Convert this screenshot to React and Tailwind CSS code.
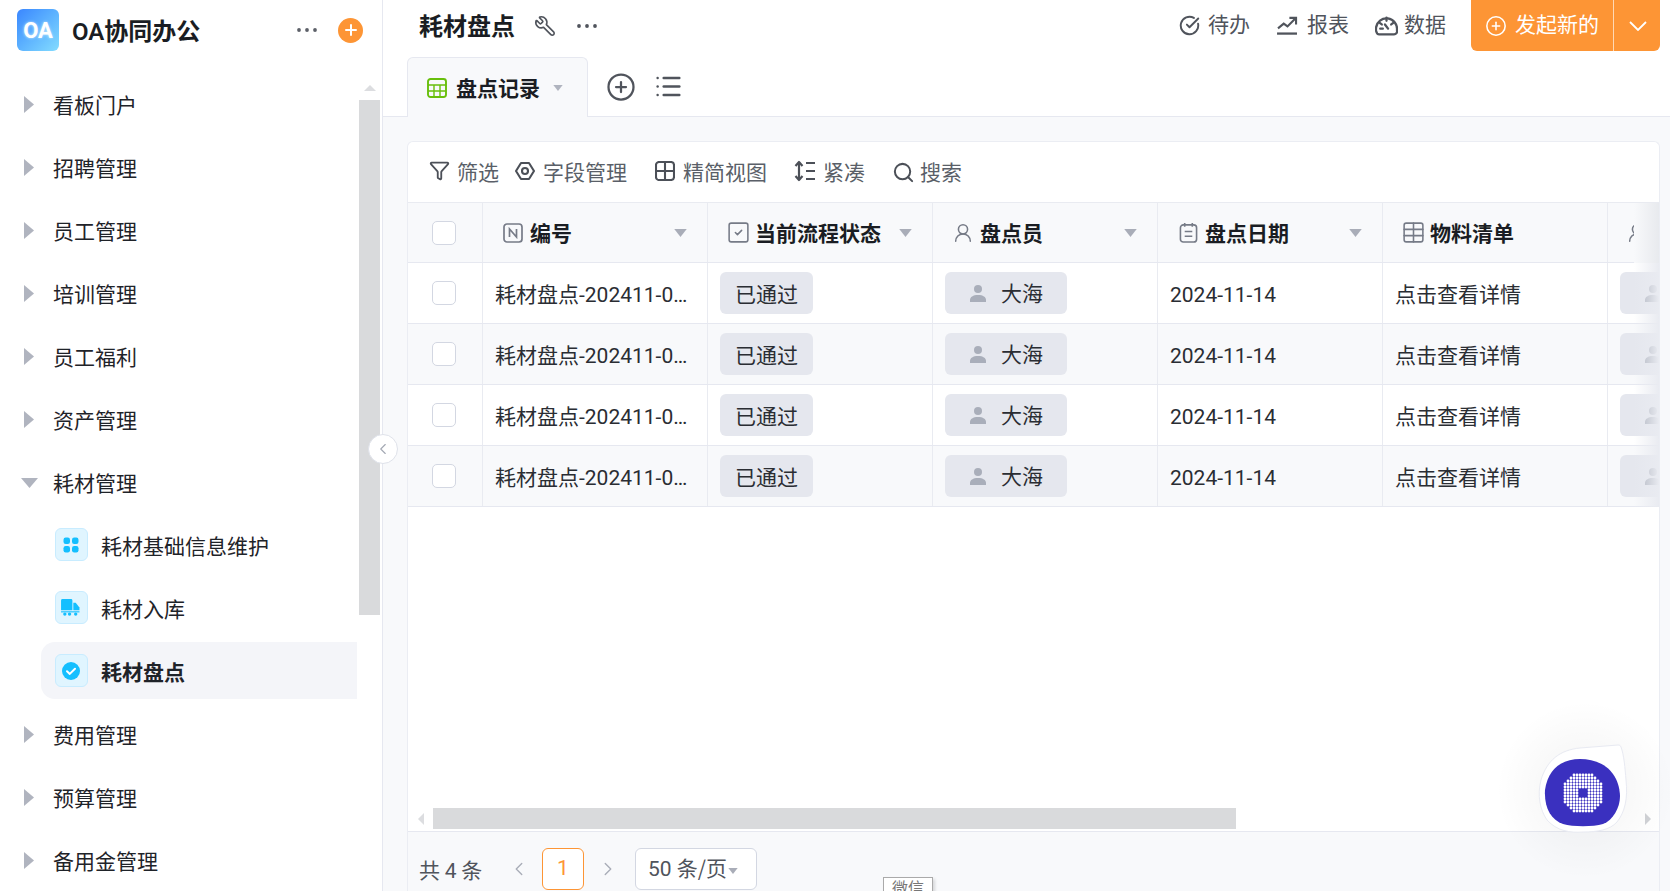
import React from 'react'
import { Wrench, CirclePlus, List, Funnel, Search, CircleCheckBig, ChevronLeft, ChevronRight, SquareCheck, UserRound, Table } from 'lucide-react'

const MENU_TOP = ['看板门户', '招聘管理', '员工管理', '培训管理', '员工福利', '资产管理']
const MENU_BOTTOM = ['费用管理', '预算管理', '备用金管理']
const ROWS = ['0001', '0002', '0003', '0004']
const COLS = 'grid grid-cols-[75px_225px_225px_225px_225px_225px_225px]'
// latin and digits sit in Roboto, the page itself stays on the CJK font
const NUM = "[font-family:'Roboto','Noto_Sans_CJK_SC',sans-serif]"

const Dots = ({ className }) => (
  <svg viewBox="0 0 20 4" className={className} fill="currentColor">
    <circle cx="2" cy="2" r="1.9" />
    <circle cx="10" cy="2" r="1.9" />
    <circle cx="18" cy="2" r="1.9" />
  </svg>
)

const Caret = ({ className }) => (
  <svg viewBox="0 0 14 9" className={className} fill="currentColor">
    <path d="M0 0h14L7 9z" />
  </svg>
)

const MenuItem = ({ label }) => (
  <div className="h-[63px] flex items-center shrink-0">
    <svg viewBox="0 0 10 17" className="w-[10px] h-[17px] ml-[24px] mr-[19px] text-[#b0b4bf]" fill="currentColor">
      <path d="M0 0l10 8.5L0 17z" />
    </svg>
    <span className="text-[21px] text-[#1f2329]">{label}</span>
  </div>
)

const SubItem = ({ label, active, children }) => (
  <div className={`h-[57px] mt-[2px] mb-[4px] ml-[41px] pl-[14px] flex items-center rounded-l-[14px] shrink-0 ${active ? 'bg-[#f4f5f9]' : ''}`}>
    <div className="w-[33px] h-[33px] pr-[2px] rounded-[6px] bg-[#e0f5ff] border border-[#c8ecff] flex items-center justify-center mr-[13px]">
      {children}
    </div>
    <span className={`text-[21px] text-[#1f2329] pt-[2px] ${active ? 'font-bold' : ''}`}>{label}</span>
  </div>
)

const Sidebar = () => (
  <aside className="relative z-10 w-[383px] shrink-0 h-full border-r border-[#e6e8f0] flex flex-col">
    <div className="h-[60px] flex items-center shrink-0">
      <div className={`w-[42px] h-[42px] ml-[17px] rounded-[6px] bg-gradient-to-br from-[#3b86ff] to-[#84dcff] flex items-center justify-center text-white font-bold text-[22px] [text-shadow:0_0_3px_#ffffffaa] ${NUM}`}>OA</div>
      <span className="ml-[13px] w-[131px] pt-[2px] text-[24px] font-semibold text-[#1a1d23] whitespace-nowrap"><span className={NUM}>OA</span>协同办公</span>
      <Dots className="w-[20px] h-[4px] ml-[94px] text-[#5c6068]" />
      <div className="w-[25px] h-[25px] ml-[21px] rounded-full bg-[#fd9535] flex items-center justify-center">
        <svg viewBox="0 0 12 12" className="w-[12px] h-[12px]" stroke="white" strokeWidth="2" strokeLinecap="round">
          <path d="M6 1v10M1 6h10" />
        </svg>
      </div>
    </div>
    <div className="flex flex-1 min-h-0 pt-[13px]">
      <div className="w-[357px] shrink-0 flex flex-col">
        {MENU_TOP.map(m => <MenuItem key={m} label={m} />)}
        <div className="h-[63px] flex items-center shrink-0">
          <svg viewBox="0 0 17 10" className="w-[17px] h-[10px] ml-[21px] mr-[15px] text-[#b0b4bf]" fill="currentColor">
            <path d="M0 0h17L8.5 10z" />
          </svg>
          <span className="text-[21px] text-[#1f2329]">耗材管理</span>
        </div>
        <SubItem label="耗材基础信息维护">
          <svg viewBox="0 0 16 16" className="w-[16px] h-[16px]" fill="#14bfff">
            <rect x="0.5" y="0.5" width="6.5" height="6.5" rx="2.2" />
            <rect x="9" y="0.5" width="6.5" height="6.5" rx="2.2" />
            <rect x="0.5" y="9" width="6.5" height="6.5" rx="2.2" />
            <rect x="9" y="9" width="6.5" height="6.5" rx="2.2" />
          </svg>
        </SubItem>
        <SubItem label="耗材入库">
          <svg viewBox="0 0 20 18" className="w-[19px] h-[17px]" fill="#14bfff">
            <path d="M1.5 0h9a1.5 1.5 0 0 1 1.5 1.5V12H0V1.5A1.5 1.5 0 0 1 1.5 0z" />
            <path d="M13 4h2.5L19.5 9v3H13z" />
            <path d="M0 13h19.5v1.2H0z" />
            <circle cx="4" cy="16" r="1.8" />
            <circle cx="9" cy="16" r="1.8" />
            <circle cx="15.5" cy="16" r="1.8" />
          </svg>
        </SubItem>
        <SubItem label="耗材盘点" active>
          <svg viewBox="0 0 18 18" className="w-[18px] h-[18px]">
            <circle cx="9" cy="9" r="9" fill="#14bfff" />
            <path d="M5 9.3l2.8 2.6L13 6.8" fill="none" stroke="white" strokeWidth="2" strokeLinecap="round" strokeLinejoin="round" />
          </svg>
        </SubItem>
        {MENU_BOTTOM.map(m => <MenuItem key={m} label={m} />)}
      </div>
      <div className="w-[21px] ml-[2px] flex flex-col items-center">
        <svg viewBox="0 0 12 6" className="w-[12px] h-[6px] mt-[12px] mb-[9px] text-[#dcdde0]" fill="currentColor">
          <path d="M6 0l6 6H0z" />
        </svg>
        <div className="w-[21px] h-[515px] bg-[#d9dadc]" />
      </div>
    </div>
    <button className="absolute left-[368px] top-[434px] w-[30px] h-[30px] rounded-full bg-white border border-[#dfe2ea] flex items-center justify-center text-[#a3a8b3]">
      <ChevronLeft size={18} strokeWidth={1.5} />
    </button>
  </aside>
)

const TopLink = ({ icon, label, className }) => (
  <div className={`flex items-center text-[21px] text-[#50545c] ${className}`}>
    {icon}
    <span className="pb-[4px]">{label}</span>
  </div>
)

const Header = () => (
  <header className="h-[57px] flex items-start shrink-0">
    <div className="h-[51px] flex items-center pl-[36px] flex-1">
      <span className="text-[24px] font-bold text-[#1a1d23] pb-[2px]">耗材盘点</span>
      <Wrench size={22} strokeWidth={1.8} className="ml-[19px] text-[#50545c] -scale-x-100" />
      <Dots className="w-[20px] h-[4px] ml-[21px] text-[#50545c]" />
    </div>
    <div className="h-[51px] flex items-center">
      <TopLink label="待办" className="mr-[27px]" icon={<CircleCheckBig size={21} strokeWidth={2.2} className="mr-[8px]" />} />
      <TopLink label="报表" className="mr-[26px]" icon={
        <svg viewBox="0 0 22 20" className="w-[21px] h-[19px] mr-[9px]" fill="none" stroke="currentColor" strokeWidth="2.200">
          <path d="M1 13l6-5 4 3 8-8M13 2h7v7" />
          <path d="M0 18.5h21" strokeWidth="2.4" />
        </svg>
      } />
      <TopLink label="数据" className="mr-[25px]" icon={
        <svg viewBox="0 0 22 20" className="w-[23px] h-[21px] mr-[6px]" fill="none" stroke="currentColor" strokeWidth="2.200">
          <path d="M4 18.5h14a3 3 0 0 0 3-4A10 10 0 1 0 1 12c0 1-.2 2 0 3 .4 2 1.5 3.500 3 3.500z" />
          <path d="M11 2.500v3M4.500 7.500l2 1.500M17.500 7.500l-2 1.500M5 13h2.500M9.500 9l3 4" strokeLinecap="round" />
        </svg>
      } />
      <div className="w-[189px] h-[51px] bg-[#fd9535] rounded-b-[6px] flex items-center text-white mr-[10px]">
        <CirclePlus size={22} strokeWidth={1.7} className="ml-[14px] mr-[8px]" />
        <span className="text-[21px] w-[84px] pb-[4px] whitespace-nowrap">发起新的</span>
        <div className="w-px h-full bg-[#ffd9b5] ml-[14px]" />
        <svg viewBox="0 0 18 10" className="w-[18px] h-[10px] ml-[15px]" fill="none" stroke="white" strokeWidth="1.800">
          <path d="M1 1l8 8 8-8" />
        </svg>
      </div>
    </div>
  </header>
)

const Tabs = () => (
  <div className="h-[60px] flex items-end border-b border-[#e6e8f0] pl-[24px] shrink-0">
    <div className="w-[181px] h-[60px] -mb-px bg-[#f8f9fb] border border-b-0 border-[#e6e8f0] rounded-t-[6px] flex items-center pl-[19px]">
      <svg viewBox="0 0 20 20" className="w-[20px] h-[20px] mr-[9px]" fill="none" stroke="#68bf0c" strokeWidth="1.900">
        <rect x="1" y="1" width="18" height="18" rx="2.500" />
        <path d="M1 7h18M1 13h18M7 7v12M13 7v12" strokeWidth="1.400" />
      </svg>
      <span className="text-[21px] font-bold text-[#1a1d23]">盘点记录</span>
      <Caret className="w-[10px] h-[6px] ml-[13px] text-[#b0b4bf]" />
    </div>
    <div className="h-[58px] flex items-center text-[#50545c]">
      <CirclePlus size={30} strokeWidth={1.800} className="ml-[18px]" />
      <List size={29} strokeWidth={2} className="ml-[18px] -mt-[2px]" />
    </div>
  </div>
)

const Tool = ({ icon, label, className }) => (
  <div className={`flex items-center text-[21px] text-[#5a5f68] ${className}`}>
    {icon}
    <span>{label}</span>
  </div>
)

const Toolbar = () => (
  <div className="h-[61px] flex items-center pl-[21px] border-b border-[#e9ebf1] shrink-0">
    <Tool label="筛选" className="mr-[16px]" icon={<Funnel size={21} strokeWidth={2.100} className="mr-[7px] text-[#4c5058] -mt-[3px]" />} />
    <Tool label="字段管理" className="mr-[28px]" icon={
      <svg viewBox="0 0 20 20" className="w-[20px] h-[20px] mr-[8px] text-[#4c5058] -mt-[3px]" fill="none" stroke="currentColor" strokeWidth="2.100">
        <path d="M6 2h8l5 8-5 8H6l-5-8z" strokeLinejoin="round" />
        <circle cx="10" cy="10" r="3" />
      </svg>
    } />
    <Tool label="精简视图" className="mr-[27px]" icon={
      <svg viewBox="0 0 20 20" className="w-[20px] h-[20px] mr-[8px] text-[#4c5058] -mt-[3px]" fill="none" stroke="currentColor" strokeWidth="2.100">
        <rect x="1" y="1" width="18" height="18" rx="3" />
        <path d="M10 1v18M1 10h18" />
      </svg>
    } />
    <Tool label="紧凑" className="mr-[27px]" icon={
      <svg viewBox="0 0 22 22" className="w-[22px] h-[22px] mr-[7px] text-[#4c5058] -mt-[2px]" fill="none" stroke="currentColor" strokeWidth="2.200">
        <path d="M5 2v18" />
        <path d="M1.500 6L5 2l3.500 4M1.500 16L5 20l3.500-4" strokeLinejoin="round" />
        <path d="M12 3h9M12 11h9M12 19h9" />
      </svg>
    } />
    <Tool label="搜索" icon={<Search size={23} strokeWidth={2.100} className="mr-[5px] text-[#4c5058]" />} />
  </div>
)

const HeadCell = ({ icon, label, caret }) => (
  <div className="h-full flex items-center pl-[19px] pr-[20px] border-r border-[#e9ebf1]">
    <span className="w-[22px] h-[22px] mr-[6px] flex items-center justify-center text-[#767b87]">{icon}</span>
    <span className="text-[21px] font-bold text-[#1a1d23] flex-1 whitespace-nowrap">{label}</span>
    {caret && <Caret className="w-[13px] h-[8px] text-[#a9adb8]" />}
  </div>
)

const Check = () => <div className="w-[24px] h-[24px] rounded-[5px] border border-[#d3d7e2] bg-white" />

const Person = () => (
  <svg viewBox="0 0 16 18" className="w-[16px] h-[18px] text-[#a9aeba]" fill="currentColor">
    <circle cx="8" cy="5" r="4" />
    <path d="M0 18v-2c0-3 3-5 8-5s8 2 8 5v2z" />
  </svg>
)

const PersonTag = () => (
  <span className="w-[122px] h-[42px] rounded-[6px] bg-[#e5e7ee] flex items-center pl-[25px] gap-[15px] text-[21px] text-[#2a2d33] whitespace-nowrap"><Person />大海</span>
)

const TableView = () => (
  <div className="relative flex-1 min-h-0 overflow-hidden">
    <div className={`${COLS} h-[60px] bg-[#f8f9fb] border-b border-[#e6e8f0] w-[1425px]`}>
      <div className="h-full flex items-center justify-center pr-[2px] border-r border-[#e9ebf1]"><Check /></div>
      <HeadCell label="编号" caret icon={
        <svg viewBox="0 0 20 20" className="w-[20px] h-[20px]" fill="none" stroke="currentColor" strokeWidth="1.700">
          <rect x="1" y="1" width="18" height="18" rx="3" />
          <path d="M6.500 14V6l7 8V6" />
        </svg>
      } />
      <HeadCell label="当前流程状态" caret icon={<SquareCheck size={25} strokeWidth={1.500} className="shrink-0" />} />
      <HeadCell label="盘点员" caret icon={<UserRound size={22} strokeWidth={1.700} />} />
      <HeadCell label="盘点日期" caret icon={
        <svg viewBox="0 0 20 22" className="w-[19px] h-[21px]" fill="none" stroke="currentColor" strokeWidth="1.700">
          <rect x="1.500" y="3" width="17" height="18" rx="3" />
          <path d="M6 1v4M14 1v4M6 10h8M6 15h8" />
        </svg>
      } />
      <HeadCell label="物料清单" icon={<Table size={25} strokeWidth={1.500} className="shrink-0" />} />
      <div className="h-full flex items-center pl-[18px] text-[#767b87]"><UserRound size={22} strokeWidth={1.700} /></div>
    </div>
    {ROWS.map((r, i) => (
      <div key={r} className={`${COLS} h-[61px] w-[1425px] border-b border-[#e6e8f0] ${i % 2 ? 'bg-[#f8f9fb]' : 'bg-white'}`}>
        <div className="flex items-center justify-center pr-[2px] border-r border-[#e9ebf1]"><Check /></div>
        <div className="flex items-center pl-[12px] pr-[12px] border-r border-[#e9ebf1] min-w-0">
          <span className={`truncate pt-[6px] text-[21px] text-[#2a2d33] ${NUM}`}>耗材盘点-202411-{r}</span>
        </div>
        <div className="flex items-center pl-[12px] border-r border-[#e9ebf1]">
          <span className="w-[93px] h-[42px] pt-[1px] rounded-[6px] bg-[#e5e7ee] flex items-center justify-center text-[21px] text-[#2a2d33]">已通过</span>
        </div>
        <div className="flex items-center pl-[12px] border-r border-[#e9ebf1]"><PersonTag /></div>
        <div className="flex items-center pl-[12px] border-r border-[#e9ebf1] text-[21px] text-[#2a2d33]"><span className={`pt-[6px] ${NUM}`}>2024-11-14</span></div>
        <div className="flex items-center pl-[12px] pt-[2px] border-r border-[#e9ebf1] text-[21px] text-[#2a2d33]">点击查看详情</div>
        <div className="flex items-center pl-[12px]"><PersonTag /></div>
      </div>
    ))}
    <div className="absolute right-0 top-0 w-[25px] h-[60px] bg-gradient-to-r from-[#f8f9fb] to-[#e8eaee]" />
    <div className="absolute right-0 top-[60px] w-[25px] h-[244px] bg-gradient-to-r from-transparent to-[#e9ebf1]" />
  </div>
)

const HScroll = () => (
  <div className="h-[23px] flex items-center shrink-0 bg-white pb-[2px]">
    <svg viewBox="0 0 6 12" className="w-[6px] h-[12px] ml-[10px] text-[#dcdde0]" fill="currentColor"><path d="M6 0v12L0 6z" /></svg>
    <div className="w-[803px] h-[21px] ml-[9px] bg-[#d9dadc]" />
    <svg viewBox="0 0 6 12" className="w-[6px] h-[12px] ml-auto mr-[8px] text-[#d0d2d6]" fill="currentColor"><path d="M0 0v12l6-6z" /></svg>
  </div>
)

const Pagination = () => (
  <div className="h-[60px] border-t border-[#e6e8f0] bg-[#f8f9fb] flex items-start pt-[16px] pl-[11px] shrink-0 text-[21px] text-[#50545c]">
    <span className="leading-[42px] w-[76px] whitespace-nowrap">共 <span className={NUM}>4</span> 条</span>
    <ChevronLeft size={22} strokeWidth={1.500} className="mt-[10px] ml-[13px] text-[#a9adb8]" />
    <span className={`w-[42px] h-[42px] ml-[12px] rounded-[6px] border border-[#fd9535] bg-white text-[#fd9535] flex items-center justify-center ${NUM}`}>1</span>
    <ChevronRight size={22} strokeWidth={1.500} className="mt-[10px] ml-[13px] text-[#a9adb8]" />
    <div className="w-[122px] h-[42px] ml-[16px] rounded-[6px] border border-[#d3d7e2] bg-white flex items-center pl-[12px] text-[#50545c] whitespace-nowrap">
      <span><span className={NUM}>50 </span>条/页</span>
      <Caret className="w-[10px] h-[6px] ml-[1px] mt-[3px] text-[#a9adb8]" />
    </div>
  </div>
)

const Bot = () => {
  const dots = []
  for (let y = -21; y <= 21; y += 3) {
    for (let x = -21; x <= 21; x += 3) {
      const inner = Math.abs(x) <= 3 && Math.abs(y) <= 3
      if (x * x + y * y < 440 && !inner) dots.push([x, y])
    }
  }
  return (
    <div className="absolute right-[35px] bottom-[51px] w-[100px] h-[100px]">
      <div className="absolute -inset-[40px] rounded-full bg-[radial-gradient(circle,#0000000d,transparent_70%)]" />
      <svg viewBox="0 0 100 100" className="absolute inset-0 w-[100px] h-[100px]">
        <path d="M83 5C70 6 58 7 45 8 25 10 12 20 6 40 2 55 5 70 12 80 22 91 35 93 48 92 62 92 75 90 82 82 90 72 93 58 91 40 90 28 89 15 86 7 85.500 5.500 84.500 5 83 5z" fill="white" stroke="#e8eaf2" strokeWidth="1" />
        <path d="M45 19C28 19 13 28 10 50 9 68 16 80 28 84 38 87 58 87 68 84 78 80 85 68 85 56 84 30 65 19 45 19z" fill="#3a30bf" />
        <g transform="translate(48 53)" fill="white">
          {dots.map(([x, y]) => <circle key={`${x}-${y}`} cx={x} cy={y} r="1.400" />)}
        </g>
      </svg>
    </div>
  )
}

export default function App() {
  return (
    <div className="relative w-full h-screen overflow-hidden flex bg-white [font-family:'Noto_Sans_CJK_SC',sans-serif]">
      <Sidebar />
      <main className="relative flex-1 min-w-0 flex flex-col">
        <Header />
        <Tabs />
        <div className="flex-1 min-h-0 bg-[#f8f9fb] pl-[24px] pr-[10px] pt-[24px]">
          <div className="h-full rounded-t-[6px] border border-b-0 border-[#ebedf3] bg-white flex flex-col overflow-hidden">
            <Toolbar />
            <TableView />
            <HScroll />
            <Pagination />
          </div>
        </div>
        <Bot />
      </main>
      <div className="absolute left-[883px] top-[877px] w-[50px] h-[20px] bg-white border border-[#aaaaaa] shadow-[2px_2px_3px_#00000022] text-center text-[16px] leading-[18px] text-[#777]">微信</div>
    </div>
  )
}
